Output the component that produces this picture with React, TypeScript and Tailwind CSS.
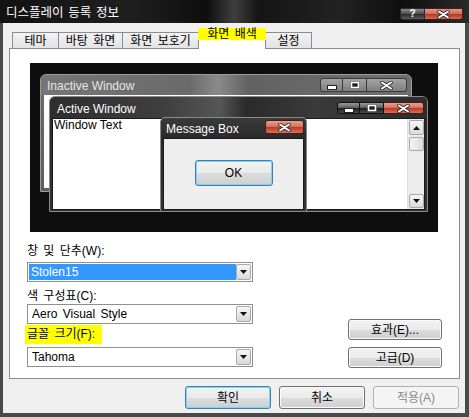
import React from "react";

function Tri({ up }: { up?: boolean }) {
  return (
    <svg width="7" height="4" viewBox="0 0 7 4">
      <path d={up ? "M0 4H7L3.5 0Z" : "M0 0H7L3.5 4Z"} fill="#111" />
    </svg>
  );
}

function MinGlyph() {
  return (
    <svg width="10" height="5" viewBox="0 0 10 5">
      <rect x="0.5" y="0.5" width="9" height="4" fill="#fff" stroke="#222" strokeWidth="1" />
    </svg>
  );
}

function MaxGlyph() {
  return (
    <svg width="10" height="8" viewBox="0 0 10 8">
      <rect x="0.5" y="0.5" width="9" height="7" fill="#222" />
      <rect x="1.5" y="1.5" width="7" height="5" fill="none" stroke="#fff" strokeWidth="1.6" />
      <rect x="3.3" y="3.3" width="3.4" height="1.6" fill="#222" />
    </svg>
  );
}

function XGlyph() {
  return (
    <svg width="13" height="9" viewBox="0 0 13 9">
      <path d="M2 1.5L11 7.5M11 1.5L2 7.5" stroke="#2a2a2a" strokeWidth="3.6" strokeLinecap="round" />
      <path d="M2 1.5L11 7.5M11 1.5L2 7.5" stroke="#fff" strokeWidth="2" strokeLinecap="round" />
    </svg>
  );
}

function Combo({ text, selected }: { text: string; selected?: boolean }) {
  return (
    <div className="h-[20px] border border-[#8e8f8f] bg-white flex items-center pl-[1px] pr-[1px]">
      {selected ? (
        <div className="w-[207px] h-[16px] bg-[#3399ff] text-white pl-[2px] leading-[16px]">{text}</div>
      ) : (
        <div className="w-[207px] h-[16px] pl-[3px] leading-[16px]">{text}</div>
      )}
      <div className="ml-auto w-[15px] h-[16px] border border-[#a9a9a9] rounded-[2px] bg-[linear-gradient(#f7f7f7,#d9d9d9)] flex items-center justify-center">
        <Tri />
      </div>
    </div>
  );
}

function Btn({ children, kind }: { children: React.ReactNode; kind?: "focus" | "disabled" }) {
  if (kind === "disabled") {
    return (
      <div className="w-full h-full border border-[#adb2b5] rounded-[3px] bg-[#f4f4f4] text-[#8a8a8a] flex items-center justify-center">
        {children}
      </div>
    );
  }
  if (kind === "focus") {
    return (
      <div className="w-full h-full border border-[#3c7fb1] rounded-[3px] bg-[linear-gradient(#f2f2f2_0%,#ebebeb_50%,#dddddd_51%,#cfcfcf_100%)] shadow-[inset_0_0_0_1px_#7fd4f5] flex items-center justify-center">
        {children}
      </div>
    );
  }
  return (
    <div className="w-full h-full border border-[#707070] rounded-[3px] bg-[linear-gradient(#f2f2f2_0%,#ebebeb_50%,#dddddd_51%,#cfcfcf_100%)] shadow-[inset_0_0_0_1px_#fbfbfb] flex items-center justify-center">
      {children}
    </div>
  );
}

export default function App() {
  return (
    <div className="w-[469px] h-[417px] flex flex-col bg-[#3a3a3a] overflow-hidden text-[12px] text-black [word-spacing:2px] font-[family-name:'Liberation_Sans','Noto_Sans_CJK_KR',sans-serif]">
      {/* Title bar */}
      <div className="h-[23px] shrink-0 flex items-start bg-[linear-gradient(90deg,#121212_0%,#1f1f1f_28%,#0e0e0e_44%,#3e3e3e_50%,#151515_55%,#222222_72%,#0f0f0f_86%,#2a2a2a_100%)]">
        <span className="ml-[6px] mt-[4px] leading-[15px] text-white text-[12.5px] font-[family-name:'Noto_Sans_CJK_KR',sans-serif]">
          디스플레이 등록 정보
        </span>
        <div className="ml-auto mr-[6px] mt-[8px] flex">
          <div className="w-[25px] h-[12px] border border-[#2a2a2a] rounded-bl-[3px] bg-[linear-gradient(#8a8a8a,#4a4a4a_50%,#2b2b2b_51%,#5a5a5a)] flex items-center justify-center text-white text-[10px] font-bold leading-none">
            ?
          </div>
          <div className="w-[38px] h-[12px] border border-[#4a1a14] border-l-0 rounded-br-[3px] bg-[linear-gradient(#e09a8c,#cf6a58_50%,#b8341f_51%,#d46b55)] flex items-center justify-center">
            <XGlyph />
          </div>
        </div>
      </div>

      {/* Body */}
      <div className="flex-1 flex flex-col bg-[#f0f0f0] border-l-[3px] border-r-[4px] border-b-[4px] border-[#4a4a4a]">
        {/* Tabs */}
        <div className="h-[26px] pt-[5px] pl-[9px] flex items-end">
          <div className="w-[47px] h-[17px] border border-b-0 border-[#898c95] bg-[linear-gradient(#f3f3f3,#e2e2e2)] flex items-center justify-center leading-none">
            테마
          </div>
          <div className="-ml-px w-[65px] h-[17px] border border-b-0 border-[#898c95] bg-[linear-gradient(#f3f3f3,#e2e2e2)] flex items-center justify-center leading-none">
            바탕 화면
          </div>
          <div className="-ml-px w-[77px] h-[17px] border border-b-0 border-[#898c95] bg-[linear-gradient(#f3f3f3,#e2e2e2)] flex items-center justify-center leading-none">
            화면 보호기
          </div>
          <div className="relative z-10 -ml-px w-[68px] h-[21px] border-x border-[#898c95] bg-white flex flex-col">
            <div className="h-[12px] -mx-px bg-[#ffff00] leading-[12px] text-center">화면 배색</div>
          </div>
          <div className="-ml-px w-[47px] h-[17px] border border-b-0 border-[#898c95] bg-[linear-gradient(#f3f3f3,#e2e2e2)] flex items-center justify-center leading-none">
            설정
          </div>
        </div>

        {/* Panel */}
        <div className="-mt-px ml-[6px] w-[451px] h-[331px] shrink-0 border border-[#898c95] bg-white flex flex-col">
          {/* Preview */}
          <div className="relative ml-[20px] mt-[14px] w-[408px] h-[169px] shrink-0 bg-[#0e0e0e] overflow-hidden [word-spacing:0px] font-[family-name:'Liberation_Sans',sans-serif]">
            {/* Inactive window */}
            <div className="absolute left-[10px] top-[11px] w-[372px] h-[118px] rounded-t-[6px] border border-[#9c9c9c] bg-[linear-gradient(#7c7c7c,#686868_18%,#5e5e5e)] flex flex-col">
              <div className="h-[20px] shrink-0 flex items-start bg-[linear-gradient(90deg,#767676,#6a6a6a_40%,#8a8a8a_48%,#626262_56%,#707070)] rounded-t-[5px]">
                <span className="ml-[6px] mt-[4px] leading-[14px] text-[#e6e6e6]">Inactive Window</span>
                <div className="ml-auto mr-[4px] mt-[3px] flex">
                  <div className="w-[23px] h-[14px] border border-[#3a3a3a] rounded-l-[3px] bg-[linear-gradient(#a4a4a4,#7e7e7e)] flex items-center justify-center">
                    <div className="mt-[5px]"><MinGlyph /></div>
                  </div>
                  <div className="w-[24px] h-[14px] border border-l-0 border-[#3a3a3a] bg-[linear-gradient(#a4a4a4,#7e7e7e)] flex items-center justify-center">
                    <MaxGlyph />
                  </div>
                  <div className="w-[40px] h-[14px] border border-l-0 border-[#3a3a3a] rounded-r-[3px] bg-[linear-gradient(#a4a4a4,#7e7e7e)] flex items-center justify-center">
                    <XGlyph />
                  </div>
                </div>
              </div>
              <div className="flex-1 mx-[3px] mb-[3px] bg-white" />
            </div>

            {/* Active window */}
            <div className="absolute left-[19px] top-[33px] w-[379px] h-[116px] rounded-t-[6px] border border-[#8a8a8a] bg-[linear-gradient(#3c3c3c,#2a2a2a_18%,#333333)] flex flex-col">
              <div className="h-[21px] shrink-0 flex items-start rounded-t-[5px] bg-[linear-gradient(90deg,#2e2e2e,#3e3e3e_30%,#565656_45%,#2a2a2a_52%,#3a3a3a_70%,#2c2c2c)]">
                <span className="ml-[7px] mt-[5px] leading-[14px] text-white">Active Window</span>
                <div className="ml-auto mr-[3px] mt-[5px] flex">
                  <div className="w-[23px] h-[12px] border border-[#111] rounded-l-[3px] bg-[linear-gradient(#9a9a9a,#5a5a5a_50%,#1c1c1c_51%,#4a4a4a)] flex items-center justify-center">
                    <div className="mt-[4px]"><MinGlyph /></div>
                  </div>
                  <div className="w-[24px] h-[12px] border border-l-0 border-[#111] bg-[linear-gradient(#9a9a9a,#5a5a5a_50%,#1c1c1c_51%,#4a4a4a)] flex items-center justify-center">
                    <MaxGlyph />
                  </div>
                  <div className="w-[40px] h-[12px] border border-l-0 border-[#4a1a14] rounded-r-[3px] bg-[linear-gradient(#e6a092,#d26e5c_50%,#bb3521_51%,#d9725c)] flex items-center justify-center">
                    <XGlyph />
                  </div>
                </div>
              </div>
              <div className="flex-1 mx-[2px] mb-[1px] border border-[#1a1a1a] bg-white flex">
                <div className="flex-1 pl-[1px] leading-[13px]">Window Text</div>
                <div className="w-[17px] bg-[#ececec] border-l border-[#e0e0e0] flex flex-col items-center py-[1px]">
                  <div className="w-[15px] h-[15px] border border-[#a8a8a8] rounded-[2px] bg-[linear-gradient(#f7f7f7,#dadada)] flex items-center justify-center">
                    <Tri up />
                  </div>
                  <div className="mt-[2px] w-[15px] h-[14px] border border-[#a8a8a8] rounded-[2px] bg-[linear-gradient(90deg,#f4f4f4,#dcdcdc)]" />
                  <div className="mt-auto w-[15px] h-[14px] border border-[#a8a8a8] rounded-[2px] bg-[linear-gradient(#f7f7f7,#dadada)] flex items-center justify-center">
                    <Tri />
                  </div>
                </div>
              </div>
            </div>

            {/* Message box */}
            <div className="absolute left-[130px] top-[54px] w-[147px] h-[95px] rounded-t-[5px] border border-[#8a8a8a] bg-[linear-gradient(#3a3a3a,#2a2a2a_22%,#333333)] flex flex-col">
              <div className="h-[20px] shrink-0 flex items-start">
                <span className="ml-[5px] mt-[4px] leading-[14px] text-white">Message Box</span>
                <div className="ml-auto mr-[2px] mt-[2px] w-[39px] h-[14px] border border-[#4a1a14] rounded-[3px] bg-[linear-gradient(#e6a092,#d26e5c_50%,#bb3521_51%,#d9725c)] flex items-center justify-center">
                  <XGlyph />
                </div>
              </div>
              <div className="flex-1 mx-[2px] mb-[1px] border border-[#1a1a1a] bg-[#eeeeee] flex justify-center">
                <div className="mt-[21px] w-[78px] h-[26px] border border-[#3c7fb1] rounded-[3px] bg-[linear-gradient(#f2f2f2_0%,#ebebeb_50%,#dddddd_51%,#cfcfcf_100%)] shadow-[inset_0_0_0_1px_#7fd4f5] flex items-center justify-center text-[12px]">
                  OK
                </div>
              </div>
            </div>
          </div>

          {/* Lower section */}
          <div className="flex">
            <div className="ml-[17px] w-[226px] flex flex-col">
              <div className="mt-[12px] leading-[14px]">창 및 단추(W):</div>
              <div className="mt-[4px]"><Combo text="Stolen15" selected /></div>
              <div className="mt-[7px] leading-[14px]">색 구성표(C):</div>
              <div className="mt-[1px]"><Combo text="Aero Visual Style" /></div>
              <div className="mt-[1px] -ml-[2px] h-[19px] w-[77px] pl-[2px] leading-[19px] bg-[#ffff00]">글꼴 크기(F):</div>
              <div className="mt-[3px]"><Combo text="Tahoma" /></div>
            </div>
            <div className="ml-auto mr-[17px] w-[94px] pt-[87px] flex flex-col gap-[7px]">
              <div className="h-[21px]"><Btn>효과(E)...</Btn></div>
              <div className="h-[21px]"><Btn>고급(D)</Btn></div>
            </div>
          </div>
        </div>

        {/* Bottom buttons */}
        <div className="mt-[7px] pr-[6px] flex justify-end gap-[8px]">
          <div className="w-[86px] h-[23px]"><Btn kind="focus">확인</Btn></div>
          <div className="w-[86px] h-[23px]"><Btn>취소</Btn></div>
          <div className="w-[86px] h-[23px]"><Btn kind="disabled">적용(A)</Btn></div>
        </div>
      </div>
    </div>
  );
}
